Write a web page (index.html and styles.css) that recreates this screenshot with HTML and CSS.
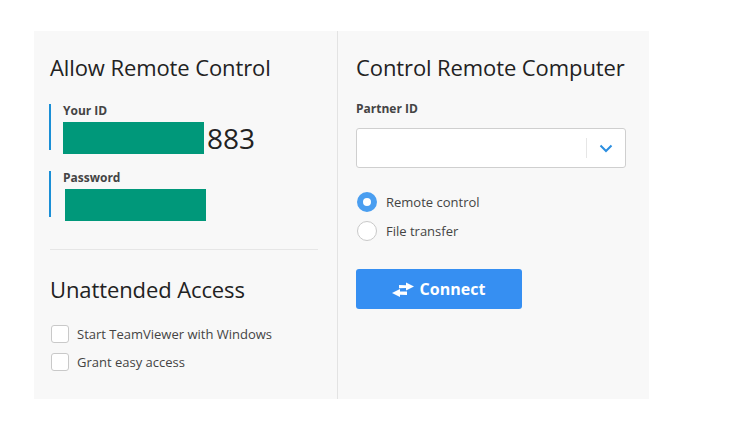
FILE: index.html
```html
<!DOCTYPE html>
<html>
<head>
<meta charset="utf-8">
<link rel="stylesheet" href="styles.css">
</head>
<body>
<div class="panel">
  <section class="col left">
    <h1 class="title">Allow Remote Control</h1>
    <div class="field">
      <div class="label">Your ID</div>
      <div class="value-row">
        <div class="mask"></div><span class="id-num">883</span>
      </div>
    </div>
    <div class="field pw">
      <div class="label">Password</div>
      <div class="value-row">
        <div class="mask mask-pw"></div>
      </div>
    </div>
    <hr class="sep">
    <h2 class="title title2">Unattended Access</h2>
    <label class="check"><span class="box"></span>Start TeamViewer with Windows</label>
    <label class="check"><span class="box"></span>Grant easy access</label>
  </section>
  <section class="col right">
    <h1 class="title">Control Remote Computer</h1>
    <div class="label partner">Partner ID</div>
    <div class="combo">
      <div class="combo-input"></div>
      <div class="combo-btn">
        <svg width="14" height="9" viewBox="0 0 14 9"><path d="M1.5 1.5 L7 7 L12.5 1.5" fill="none" stroke="#2b8ee0" stroke-width="2"/></svg>
      </div>
    </div>
    <div class="radios">
      <label class="radio"><span class="dot on"></span>Remote control</label>
      <label class="radio"><span class="dot"></span>File transfer</label>
    </div>
    <button class="connect">
      <svg class="swap" width="24" height="16" viewBox="0 0 24 16"><path d="M15 0.5 L23 4.5 L15 8.5 L15 6 L8 6.3 L8 3 L15 3.2 Z" fill="#fff"/><path d="M9 7 L1 11 L9 15 L9 12.7 L16 12.9 L16 9.6 L9 9.4 Z" fill="#fff"/></svg>
      <span>Connect</span>
    </button>
  </section>
</div>
</body>
</html>
```
FILE: styles.css
```css
* { box-sizing: border-box; }
body {
  margin: 0;
  background: #fff;
  font-family: "Open Sans", "Noto Sans", sans-serif;
  color: #222;
}
.panel {
  margin: 31px 0 0 34px;
  width: 615px;
  height: 368px;
  background: #f8f8f8;
  display: flex;
}
.col { display: flex; flex-direction: column; }
.left { width: 303px; padding: 20px 19px 0 16px; }
.right { flex: 1; border-left: 1px solid #e3e3e3; padding: 20px 0 0 18px; }
.title {
  margin: 0;
  font-weight: 400;
  font-size: 22px;
  line-height: 32px;
  color: #222;
  letter-spacing: -0.1px;
}
.field {
  margin: 21px 0 0 -1px;
  border-left: 2px solid #1b8fd6;
  padding-left: 12px;
  height: 46px;
}
.field.pw { margin-top: 21px; }
.label {
  font-weight: 700;
  font-size: 12px;
  line-height: 14px;
  color: #444;
}
.value-row { display: flex; align-items: center; margin-top: 4px; }
.mask { width: 141px; height: 32px; background: #00987a; }
.mask-pw { margin-left: 2px; }
.id-num { font-size: 28px; margin-left: 3px; color: #222; line-height: 32px; }
.sep {
  margin: 32px 0 0 0;
  border: 0;
  border-top: 1px solid #e6e6e6;
}
.title2 { margin-top: 23px; }
.check {
  display: flex;
  align-items: center;
  font-size: 13px;
  color: #444;
  height: 18px;
  margin-top: 10px;
}
.title2 + .check { margin-top: 20px; }
.box {
  width: 18px; height: 18px;
  border: 1px solid #c9c9c9;
  border-radius: 3px;
  background: #fff;
  margin: 0 8px 0 1px;
}
.partner { margin-top: 19px; }
.combo {
  margin-top: 12px;
  width: 270px;
  height: 40px;
  border: 1px solid #cfcfcf;
  border-radius: 3px;
  background: #fff;
  display: flex;
  align-items: center;
}
.combo-input { flex: 1; }
.combo-btn {
  width: 39px; height: 20px;
  border-left: 1px solid #e6e6e6;
  display: flex; align-items: center; justify-content: center;
}
.radios { margin-top: 24px; display: flex; flex-direction: column; gap: 9px; }
.radio {
  display: flex; align-items: center;
  font-size: 13px; color: #444;
  height: 20px;
}
.dot {
  width: 20px; height: 20px;
  border-radius: 50%;
  border: 1px solid #c9c9c9;
  background: #fff;
  margin: 0 9px 0 1px;
}
.dot.on {
  border: 6px solid #4a9ef0;
  background: #fff;
}
.connect {
  margin-top: 28px;
  width: 166px; height: 40px;
  background: #368ff2;
  border: 0;
  border-radius: 3px;
  color: #fff;
  font-family: "Open Sans", "Noto Sans", sans-serif;
  font-weight: 700;
  font-size: 16px;
  display: flex; align-items: center; justify-content: center;
  gap: 5px;
  padding: 0 2px 0 0;
}
.swap { margin-top: 1px; }
```
